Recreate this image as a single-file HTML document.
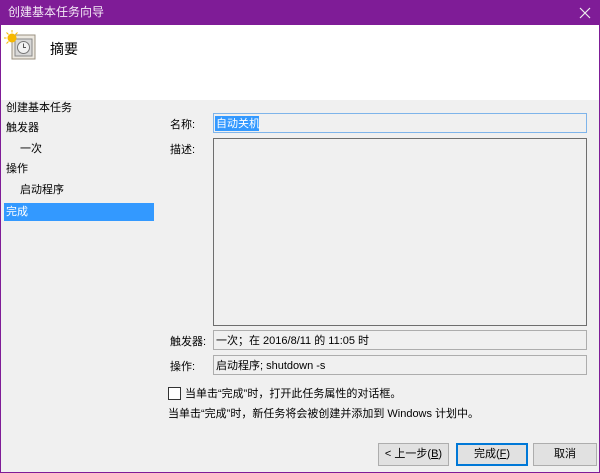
<!DOCTYPE html>
<html><head><meta charset="utf-8"><style>
*{margin:0;padding:0;box-sizing:border-box}
body{width:600px;height:473px;overflow:hidden;background:#7f1c97;font-family:"Liberation Sans","Noto Sans CJK SC",sans-serif;font-size:11px;color:#000;position:relative}
.abs{position:absolute}
#win{position:absolute;left:1px;top:25px;width:598px;height:447px;background:#f0f0f0}
#hdr{position:absolute;left:0;top:0;width:598px;height:75px;background:#fff}
.t{position:absolute;white-space:nowrap;line-height:14px}
.box{position:absolute;border:1px solid #adadad;background:#f0f0f0}
.btn{position:absolute;border:1px solid #adadad;background:#e1e1e1;text-align:center;line-height:21px;height:23px}
</style></head><body>
<div class="t" style="left:8px;top:5px;color:#f4eaf6;font-size:12px">创建基本任务向导</div>
<svg class="abs" style="left:578px;top:6px" width="14" height="14"><path d="M2 2L12 12M12 2L2 12" stroke="#eee" stroke-width="1.2"/></svg>
<div id="win">
<div id="hdr">
<svg class="abs" style="left:3px;top:5px" width="32" height="32">
<rect x="8" y="5" width="23" height="24" fill="#ece8e0" stroke="#9a9080"/>
<rect x="11" y="9" width="17" height="17" fill="#d8d8d8" stroke="#888"/>
<circle cx="19.5" cy="17.5" r="6" fill="#f2f2f2" stroke="#777"/>
<path d="M19.5 13.5V17.5H22" stroke="#555" fill="none"/>
<circle cx="8" cy="8" r="4.5" fill="#f6b800"/>
<path d="M8 0V2.5M0 8H2.5M2.5 2.5L4.5 4.5M13.5 2.5L11.5 4.5M2.5 13.5L4.5 11.5" stroke="#f6b800"/>
</svg>
<div class="t" style="left:49px;top:17px;font-size:14px">摘要</div>
</div>
<div class="t" style="left:5px;top:76px">创建基本任务</div>
<div class="t" style="left:5px;top:96px">触发器</div>
<div class="t" style="left:19px;top:117px">一次</div>
<div class="t" style="left:5px;top:137px">操作</div>
<div class="t" style="left:19px;top:158px">启动程序</div>
<div class="abs" style="left:3px;top:178px;width:150px;height:18px;background:#3399ff"></div>
<div class="t" style="left:5px;top:180px;color:#fff">完成</div>

<div class="t" style="left:169px;top:93px">名称:</div>
<div class="box" style="left:212px;top:88px;width:374px;height:20px;border-color:#7eb4ea"></div>
<div class="abs" style="left:214px;top:91px;width:44px;height:15px;background:#3399ff"></div>
<div class="t" style="left:215px;top:92px;color:#fff">自动关机</div>
<div class="t" style="left:169px;top:118px">描述:</div>
<div class="box" style="left:212px;top:113px;width:374px;height:188px;border-color:#6e6e6e"></div>

<div class="t" style="left:169px;top:310px">触发器:</div>
<div class="box" style="left:212px;top:305px;width:374px;height:20px"></div>
<div class="t" style="left:215px;top:309px">一次；在 2016/8/11 的 11:05 时</div>
<div class="t" style="left:169px;top:335px">操作:</div>
<div class="box" style="left:212px;top:330px;width:374px;height:20px"></div>
<div class="t" style="left:215px;top:334px">启动程序; shutdown -s</div>

<div class="abs" style="left:167px;top:362px;width:13px;height:13px;border:1px solid #333;background:#fff"></div>
<div class="t" style="left:184px;top:362px">当单击“完成”时，打开此任务属性的对话框。</div>
<div class="t" style="left:167px;top:382px">当单击“完成”时，新任务将会被创建并添加到 Windows 计划中。</div>

<div class="btn" style="left:377px;top:418px;width:71px">&lt; 上一步(<u>B</u>)</div>
<div class="btn" style="left:455px;top:418px;width:72px;border:2px solid #0078d7;line-height:19px">完成(<u>F</u>)</div>
<div class="btn" style="left:532px;top:418px;width:64px">取消</div>
</div>
</body></html>
